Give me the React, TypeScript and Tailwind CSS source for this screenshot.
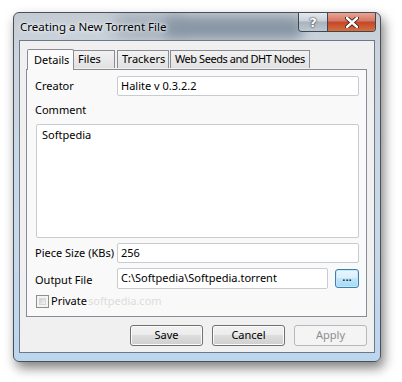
import React from "react";

const font = { fontFamily: '"Noto Sans", "Open Sans", sans-serif' };

function Input({ value, className }: { value: string; className?: string }) {
  return (
    <div
      className={
        "h-[20px] bg-white border border-[#c8cbd0] rounded-[2px] flex items-center pl-[3px] text-[11px] text-black whitespace-nowrap " +
        (className ?? "")
      }
    >
      {value}
    </div>
  );
}

function Button({ label, disabled }: { label: string; disabled?: boolean }) {
  if (disabled) {
    return (
      <div className="w-[73px] h-[21px] rounded-[3px] border border-[#b5b9bd] bg-[#f4f4f4] flex items-center justify-center text-[11px] text-[#8c8c8c]">
        {label}
      </div>
    );
  }
  return (
    <div className="w-[73px] h-[21px] rounded-[3px] border border-[#707070] bg-[linear-gradient(#f2f2f2_0%,#ebebeb_50%,#dddddd_50%,#cfcfcf_100%)] shadow-[inset_0_0_0_1px_#fbfbfb] flex items-center justify-center text-[11px] text-black">
      {label}
    </div>
  );
}

export default function App() {
  return (
    <div className="w-[402px] h-[382px] bg-white overflow-hidden pt-[12px] pl-[13px] whitespace-nowrap" style={font}>
      <div className="relative w-[368px] h-[350px] rounded-[6px] border border-[#4b5058] bg-[linear-gradient(180deg,#c3cad2_0%,#cbd4de_10%,#c9d9ea_60%,#bcd6f0_100%)] shadow-[3px_6px_12px_rgba(0,0,0,0.5)] flex flex-col">
        {/* title bar */}
        <div className="relative h-[27px] flex items-center pl-[6px] overflow-hidden">
          <div className="absolute left-[150px] top-[4px] w-[140px] h-[22px] rounded-[10px] bg-[#6d7d8e] blur-[6px] opacity-70" />
          <div className="absolute left-[100px] top-[2px] w-[70px] h-[24px] rounded-[10px] bg-[#8b98a6] blur-[8px] opacity-60" />
          <span className="relative text-[11.5px] text-black [text-shadow:0_0_6px_#ffffff,0_0_3px_#ffffff] mt-[1px]">
            Creating a New Torrent File
          </span>
          {/* caption buttons */}
          <div className="absolute right-[4px] top-0 flex h-[19px] rounded-b-[4px] border border-t-0 border-[#3f4650] overflow-hidden">
            <div className="w-[29px] h-full bg-[linear-gradient(#e4e9ee_0%,#c8d0d8_45%,#a8b3be_50%,#bcc7d1_100%)] border-r border-[#3f4650] flex items-center justify-center">
              <span className="text-[13px] font-bold text-white leading-none [text-shadow:0_0_2px_#2a2f36,0_0_1px_#2a2f36]" style={{ fontFamily: '"DejaVu Sans", sans-serif' }}>?</span>
            </div>
            <div className="w-[47px] h-full bg-[linear-gradient(#e8a493_0%,#d47763_45%,#c4452b_50%,#d5703c_100%)] flex items-center justify-center">
              <svg width="14" height="11" viewBox="0 0 14 11">
                <path d="M2 1 L12 10 M12 1 L2 10" stroke="#3b1a12" strokeWidth="4.2" strokeLinecap="round" />
                <path d="M2 1 L12 10 M12 1 L2 10" stroke="#ffffff" strokeWidth="2.4" strokeLinecap="round" />
              </svg>
            </div>
          </div>
        </div>
        {/* client area */}
        <div className="mx-[5px] w-[356px] h-[313px] border border-[#6f7983] bg-[#f0f0f0] flex flex-col px-[6px] pt-[8px]">
          {/* tabs */}
          <div className="flex items-end h-[20px] pl-[1px] relative z-10 text-[11px]">
            <div className="h-[21px] -mb-[1px] pl-[6px] border border-[#898c95] border-b-0 bg-[#fbfbfb] flex items-center rounded-t-[2px] w-[47px]">
              Details
            </div>
            <div className="h-[18px] w-[41px] border border-l-0 border-[#898c95] border-b-0 bg-[linear-gradient(#f2f2f2,#e1e1e1)] flex items-center px-[4px] mb-[1px]">
              Files
            </div>
            <div className="h-[18px] ml-[2px] w-[52px] border border-[#898c95] border-b-0 bg-[linear-gradient(#f2f2f2,#e1e1e1)] flex items-center pl-[4px] mb-[1px]">
              Trackers
            </div>
            <div className="h-[18px] ml-[1px] w-[140px] border border-[#898c95] border-b-0 bg-[linear-gradient(#f2f2f2,#e1e1e1)] flex items-center pl-[4px] mb-[1px] tracking-[-0.45px]">
              Web Seeds and DHT Nodes
            </div>
          </div>
          {/* panel */}
          <div className="w-[341px] h-[248px] border border-[#898c95] bg-[#f9f9f9] flex flex-col pl-[8px] pr-[7px] pt-[6px] text-[11px] text-black">
            <div className="flex items-center h-[20px]">
              <div className="w-[82px]">Creator</div>
              <Input value="Halite v 0.3.2.2" className="flex-1" />
            </div>
            <div className="h-[28px] flex items-center">Comment</div>
            <div className="ml-[1px] h-[114px] bg-white border border-[#c8cbd0] rounded-[2px] pl-[5px] pt-[2px]">
              Softpedia
            </div>
            <div className="flex items-center h-[20px] mt-[5px]">
              <div className="w-[82px]">Piece Size (KBs)</div>
              <Input value="256" className="flex-1" />
            </div>
            <div className="flex items-center h-[21px] mt-[5px]">
              <div className="w-[82px] pt-[3px]">Output File</div>
              <Input value="C:\Softpedia\Softpedia.torrent" className="w-[211px] h-[21px]" />
              <div className="ml-[7px] w-[24px] h-[19px] rounded-[3px] border border-[#3c7fb1] bg-[linear-gradient(#eaf6fd_0%,#d9f0fc_50%,#bee6fd_50%,#a7d9f5_100%)] shadow-[inset_0_0_0_1px_#c5e7fa] flex items-center justify-center text-[12px] leading-none pb-[3px]">
                ...
              </div>
            </div>
            <div className="flex items-center h-[14px] mt-[5px] ml-[1px]">
              <div className="w-[13px] h-[13px] border border-[#8f8f8f] bg-[#f4f4f4] p-[2px]">
                <div className="w-full h-full bg-[linear-gradient(135deg,#cbcfd5,#f6f6f6)] border border-[#d6d6d6]" />
              </div>
              <span className="ml-[2px]">Private</span>
              <span className="ml-[1px] text-[11px] text-[#dcdcdc]">softpedia.com</span>
            </div>
          </div>
          {/* buttons */}
          <div className="flex justify-end gap-[9px] mt-[8px] pr-[1px]">
            <Button label="Save" />
            <Button label="Cancel" />
            <Button label="Apply" disabled />
          </div>
        </div>
      </div>
    </div>
  );
}
